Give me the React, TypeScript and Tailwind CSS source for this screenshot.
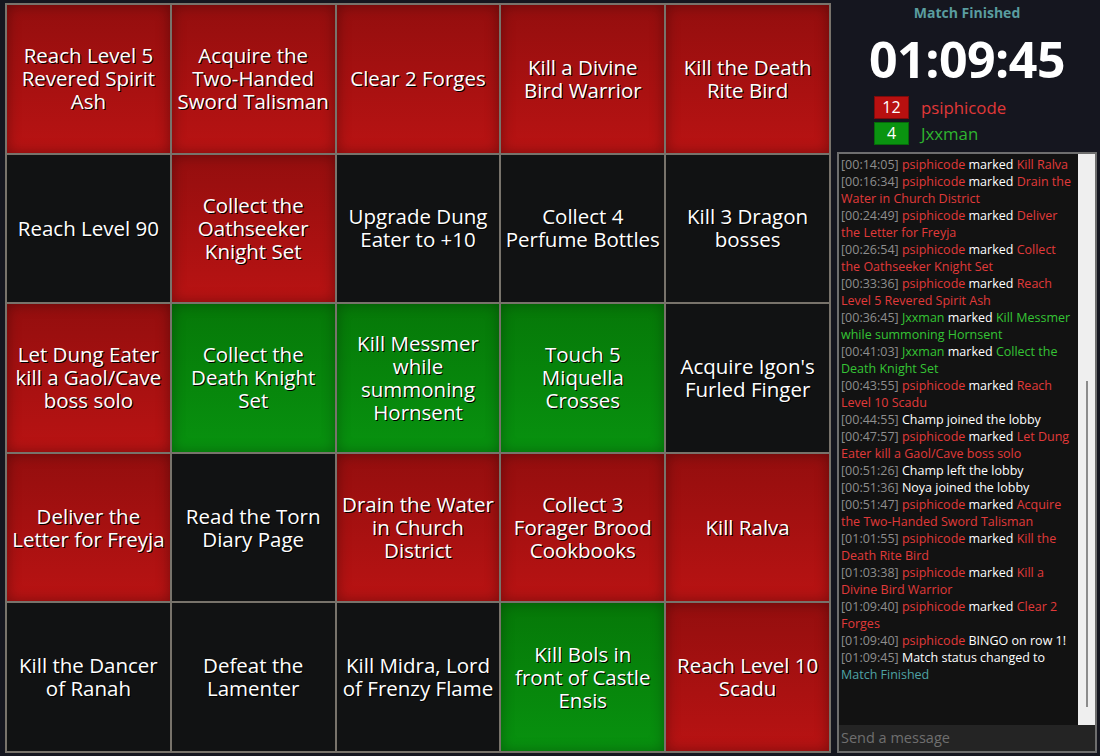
import React from "react";

type Color = "r" | "g" | "b";
const cells: [Color, string[]][] = [
  ["r", ["Reach Level 5", "Revered Spirit", "Ash"]],
  ["r", ["Acquire the", "Two-Handed", "Sword Talisman"]],
  ["r", ["Clear 2 Forges"]],
  ["r", ["Kill a Divine", "Bird Warrior"]],
  ["r", ["Kill the Death", "Rite Bird"]],
  ["b", ["Reach Level 90"]],
  ["r", ["Collect the", "Oathseeker", "Knight Set"]],
  ["b", ["Upgrade Dung", "Eater to +10"]],
  ["b", ["Collect 4", "Perfume Bottles"]],
  ["b", ["Kill 3 Dragon", "bosses"]],
  ["r", ["Let Dung Eater", "kill a Gaol/Cave", "boss solo"]],
  ["g", ["Collect the", "Death Knight", "Set"]],
  ["g", ["Kill Messmer", "while", "summoning", "Hornsent"]],
  ["g", ["Touch 5", "Miquella", "Crosses"]],
  ["b", ["Acquire Igon's", "Furled Finger"]],
  ["r", ["Deliver the", "Letter for Freyja"]],
  ["b", ["Read the Torn", "Diary Page"]],
  ["r", ["Drain the Water", "in Church", "District"]],
  ["r", ["Collect 3", "Forager Brood", "Cookbooks"]],
  ["r", ["Kill Ralva"]],
  ["b", ["Kill the Dancer", "of Ranah"]],
  ["b", ["Defeat the", "Lamenter"]],
  ["b", ["Kill Midra, Lord", "of Frenzy Flame"]],
  ["g", ["Kill Bols in", "front of Castle", "Ensis"]],
  ["r", ["Reach Level 10", "Scadu"]],
];

const cellBg: Record<Color, string> = {
  r: "bg-gradient-to-b from-[#940e0e] to-[#b91313] shadow-[inset_0_0_14px_rgba(0,0,0,0.35)]",
  g: "bg-gradient-to-b from-[#067808] to-[#08920f] shadow-[inset_0_0_14px_rgba(0,0,0,0.3)]",
  b: "bg-[#111213]",
};

type Seg = [string, string];
const T = "text-[#8e8e8e]";
const R = "text-[#e03a3a]";
const G = "text-[#35c435]";
const W = "text-white";
const C = "text-[#4fa3a5]";

const msgs: Seg[][][] = [
  [[["[00:14:05] ", T], ["psiphicode", R], [" marked ", W], ["Kill Ralva", R]]],
  [[["[00:16:34] ", T], ["psiphicode", R], [" marked ", W], ["Drain the", R]], [["Water in Church District", R]]],
  [[["[00:24:49] ", T], ["psiphicode", R], [" marked ", W], ["Deliver", R]], [["the Letter for Freyja", R]]],
  [[["[00:26:54] ", T], ["psiphicode", R], [" marked ", W], ["Collect", R]], [["the Oathseeker Knight Set", R]]],
  [[["[00:33:36] ", T], ["psiphicode", R], [" marked ", W], ["Reach", R]], [["Level 5 Revered Spirit Ash", R]]],
  [[["[00:36:45] ", T], ["Jxxman", G], [" marked ", W], ["Kill Messmer", G]], [["while summoning Hornsent", G]]],
  [[["[00:41:03] ", T], ["Jxxman", G], [" marked ", W], ["Collect the", G]], [["Death Knight Set", G]]],
  [[["[00:43:55] ", T], ["psiphicode", R], [" marked ", W], ["Reach", R]], [["Level 10 Scadu", R]]],
  [[["[00:44:55] ", T], ["Champ joined the lobby", W]]],
  [[["[00:47:57] ", T], ["psiphicode", R], [" marked ", W], ["Let Dung", R]], [["Eater kill a Gaol/Cave boss solo", R]]],
  [[["[00:51:26] ", T], ["Champ left the lobby", W]]],
  [[["[00:51:36] ", T], ["Noya joined the lobby", W]]],
  [[["[00:51:47] ", T], ["psiphicode", R], [" marked ", W], ["Acquire", R]], [["the Two-Handed Sword Talisman", R]]],
  [[["[01:01:55] ", T], ["psiphicode", R], [" marked ", W], ["Kill the", R]], [["Death Rite Bird", R]]],
  [[["[01:03:38] ", T], ["psiphicode", R], [" marked ", W], ["Kill a", R]], [["Divine Bird Warrior", R]]],
  [[["[01:09:40] ", T], ["psiphicode", R], [" marked ", W], ["Clear 2", R]], [["Forges", R]]],
  [[["[01:09:40] ", T], ["psiphicode", R], [" BINGO on row 1!", W]]],
  [[["[01:09:45] ", T], ["Match status changed to", W]], [["Match Finished", C]]],
];

export default function App() {
  return (
    <div className="w-[1100px] h-[756px] bg-[#15161f] flex overflow-hidden font-['Open_Sans',sans-serif]">
      <div className="pl-[5px] pt-[3px]">
        <div className="grid grid-cols-5 grid-rows-5 gap-[2px] p-[2px] bg-[#78736b] w-[826px] h-[750px]">
          {cells.map(([c, lines], i) => (
            <div
              key={i}
              className={`${cellBg[c]} flex items-center justify-center text-center text-white text-[20.5px] leading-[23px] [text-shadow:1px_1px_0_#000]`}
            >
              <div>
                {lines.map((l, j) => (
                  <div key={j} className="whitespace-nowrap">{l}</div>
                ))}
              </div>
            </div>
          ))}
        </div>
      </div>
      <div className="flex-1 flex flex-col items-center pl-[6px] pr-[3px]">
        <div className="mt-[4px] text-[14px] leading-[18px] font-bold text-[#5a9d9f]">Match Finished</div>
        <div className="mt-[5px] text-[50px] leading-[64px] font-bold text-white tracking-[-0.5px]">01:09:45</div>
        <div className="self-start ml-[37px] mt-[5px] flex flex-col gap-[3px]">
          <div className="flex items-center h-[23px]">
            <div className="w-[35px] h-[23px] bg-[#b81010] border border-[#7d0b0b] text-white text-[16px] leading-[21px] text-center">12</div>
            <div className="ml-[12px] text-[16.8px] leading-[23px] text-[#e03838]">psiphicode</div>
          </div>
          <div className="flex items-center h-[23px]">
            <div className="w-[35px] h-[23px] bg-[#0a9410] border border-[#066a0a] text-white text-[16px] leading-[21px] text-center">4</div>
            <div className="ml-[12px] text-[16.8px] leading-[23px] text-[#2fb52f]">Jxxman</div>
          </div>
        </div>
        <div className="mt-[7px] w-full h-[601px] border-2 border-[#6e6e6e] bg-[#121212] flex flex-col">
          <div className="flex-1 flex min-h-0">
            <div className="flex-1 pl-[2px] pt-[2px] text-[12.5px] leading-[17px] overflow-hidden">
              {msgs.map((m, i) => (
                <div key={i}>
                  {m.map((line, j) => (
                    <div key={j} className="whitespace-nowrap">
                      {line.map(([t, cls], k) => (
                        <span key={k} className={cls}>{t}</span>
                      ))}
                    </div>
                  ))}
                </div>
              ))}
            </div>
            <div className="w-[17px] bg-[#efefef] relative">
              <div className="absolute left-[8px] top-[227px] w-[2px] h-[326px] bg-[#8c8c8c]" />
            </div>
          </div>
          <div className="h-[26px] bg-[#242424] flex items-center pl-[2px] text-[14.5px] text-[#6f6f6f]">Send a message</div>
        </div>
      </div>
    </div>
  );
}
